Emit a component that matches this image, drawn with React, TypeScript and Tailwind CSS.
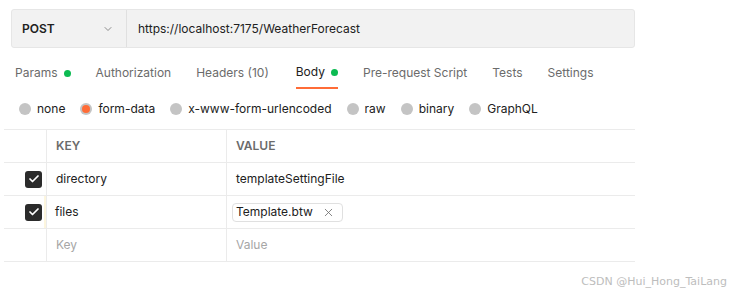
import { ChevronDown, Check, X } from "lucide-react";

const tabs = [
  { name: "Params", dot: true },
  { name: "Authorization" },
  { name: "Headers", count: "(10)" },
  { name: "Body", dot: true, active: true },
  { name: "Pre-request Script" },
  { name: "Tests" },
  { name: "Settings" },
];

const bodyTypes = ["none", "form-data", "x-www-form-urlencoded", "raw", "binary", "GraphQL"];

const App = () => {
  return (
    <div className="relative h-[296px] w-[745px] bg-white font-['Inter',sans-serif] text-[12px] text-[#212121]">
      <div className="pl-[11px] pt-[9px] pr-[110px]">
        {/* request bar */}
        <div className="flex h-[39px] items-center rounded-[3px] border border-[#e6e6e6] bg-[#f2f2f2]">
          <div className="flex h-full w-[115px] items-center justify-between border-r border-[#e0e0e0] pl-[10px] pr-[12px]">
            <span className="font-semibold text-[#212121]">POST</span>
            <ChevronDown size={12} strokeWidth={1.5} className="text-[#6b6b6b]" />
          </div>
          <span className="pl-[11px] text-[#212121]">https://localhost:7175/WeatherForecast</span>
        </div>

        {/* tabs */}
        <div className="mt-[13px] flex h-[28px] items-start gap-[25px] pl-[4px]">
          {tabs.map((t) => (
            <div
              key={t.name}
              className={
                t.active
                  ? "ml-[2px] flex h-[28px] items-center gap-[6px] border-b-2 border-[#ff6c37] pb-[4px] text-[#212121]"
                  : "flex h-[28px] items-center gap-[6px] pb-[4px] text-[#6b6b6b]"
              }
            >
              <span>
                {t.name}
                {t.count && <span> {t.count}</span>}
              </span>
              {t.dot && <span className="h-[7px] w-[7px] rounded-full bg-[#0cbb52]" />}
            </div>
          ))}
        </div>

        {/* body types */}
        <div className="mt-[8px] flex h-[24px] items-center gap-[15px] pl-[8px]">
          {bodyTypes.map((b) => (
            <div key={b} className="flex items-center gap-[6px]">
              {b === "form-data" ? (
                <span className="flex h-[12px] w-[12px] items-center justify-center rounded-full bg-[#c4c4c4]">
                  <span className="h-[8px] w-[8px] rounded-full bg-[#ff6c37]" />
                </span>
              ) : (
                <span className="h-[12px] w-[12px] rounded-full bg-[#c4c4c4]" />
              )}
              <span className="text-[#212121]">{b}</span>
            </div>
          ))}
        </div>
      </div>

      {/* table */}
      <div className="ml-[4px] mt-[8px] w-[631px] border-t border-[#ebebeb]">
        <div className="flex h-[33px] border-b border-[#ebebeb]">
          <div className="w-[43px] border-r border-[#ebebeb]" />
          <div className="flex w-[180px] items-center border-r border-[#ebebeb] pl-[9px] font-semibold text-[#6b6b6b]">
            KEY
          </div>
          <div className="flex flex-1 items-center pl-[9px] font-semibold text-[#6b6b6b]">VALUE</div>
        </div>
        <div className="flex h-[33px] border-b border-[#ebebeb]">
          <div className="flex w-[43px] items-center justify-end border-r border-[#ebebeb] pr-[4px]">
            <span className="flex h-[17px] w-[17px] items-center justify-center rounded-[3px] bg-[#2b2b2b]">
              <Check size={12} strokeWidth={3.5} className="text-white" />
            </span>
          </div>
          <div className="flex w-[180px] items-center border-r border-[#ebebeb] pl-[9px]">directory</div>
          <div className="flex flex-1 items-center pl-[9px]">templateSettingFile</div>
        </div>
        <div className="flex h-[33px] border-b border-[#ebebeb]">
          <div className="flex w-[43px] items-center justify-end border-r border-[#ebebeb] pr-[4px]">
            <span className="flex h-[17px] w-[17px] items-center justify-center rounded-[3px] bg-[#2b2b2b]">
              <Check size={12} strokeWidth={3.5} className="text-white" />
            </span>
          </div>
          <div className="flex w-[180px] items-center border-r border-[#ebebeb] pl-[9px]">
            <span className="-ml-[12px] mr-[9px] h-full w-[2px] bg-[#fdf6de]" />
            files
          </div>
          <div className="flex flex-1 items-center pl-[5px]">
            <span className="flex h-[19px] items-center gap-[9px] rounded-[4px] border border-[#e0e0e0] pl-[3px] pr-[7px]">
              Template.btw
              <X size={13} strokeWidth={1.5} className="text-[#6b6b6b]" />
            </span>
          </div>
        </div>
        <div className="flex h-[33px] border-b border-[#ebebeb]">
          <div className="w-[43px] border-r border-[#ebebeb]" />
          <div className="flex w-[180px] items-center border-r border-[#ebebeb] pl-[9px] text-[#a6a6a6]">Key</div>
          <div className="flex flex-1 items-center pl-[9px] text-[#a6a6a6]">Value</div>
        </div>
      </div>

      <div className="absolute bottom-[6px] right-[18px] font-['DejaVu_Sans',sans-serif] text-[11px] text-[#bdbdbd]">
        CSDN @Hui_Hong_TaiLang
      </div>
    </div>
  );
};

export default App;
